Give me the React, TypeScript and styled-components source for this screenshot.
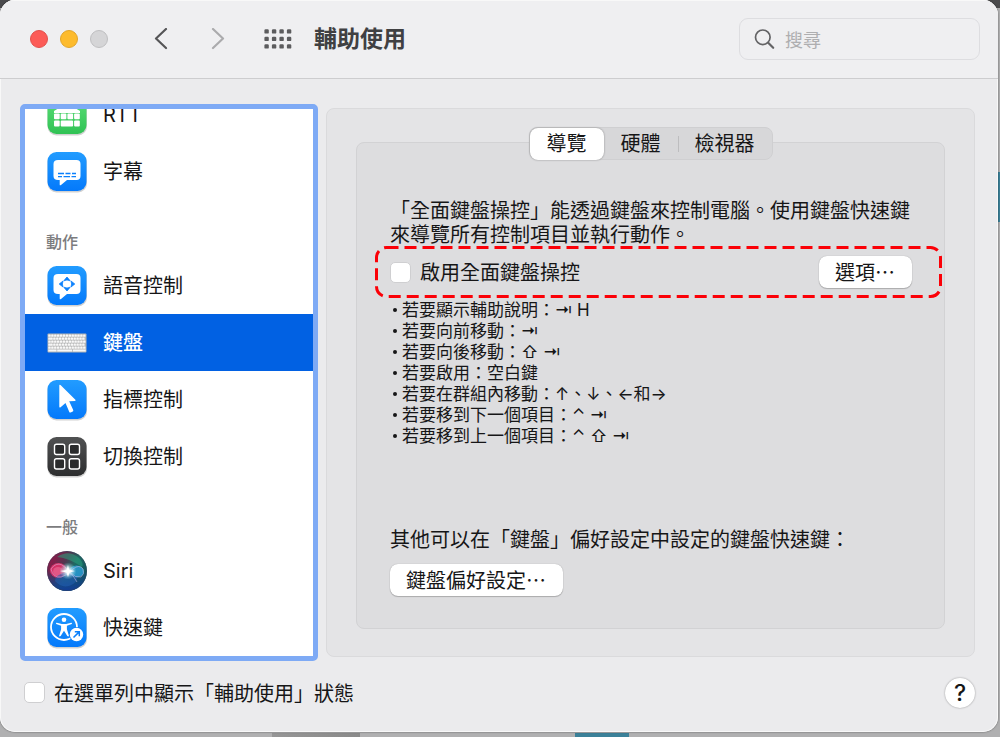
import React from "react";
import styled, { createGlobalStyle } from "styled-components";

const cjk = `"Noto Sans CJK TC", sans-serif`;
const latin = `Inter, "Noto Sans CJK TC", sans-serif`;

const GlobalStyle = createGlobalStyle`
  *, *::before, *::after { box-sizing: border-box; }
  body { margin: 0; font-family: ${cjk}; font-size: 20px; line-height: 24px; color: #161617; }
  button, input { font: inherit; color: inherit; margin: 0; }
`;

const Desktop = styled.div`
  display: flex;
  min-height: 100vh;
  padding: 0 2px 5px 0;
  background:
    linear-gradient(#3b8199, #3b8199) right 0 top 172px / 2px 50px no-repeat,
    linear-gradient(#3b8199, #3b8199) left 575px bottom 0 / 54px 4px no-repeat,
    linear-gradient(90deg, #969696, #8a8a8a) left 272px bottom 0 / 88px 4px no-repeat,
    linear-gradient(#4a4a4c, #4a4a4c) left 0 top 0 / 100% 8px no-repeat,
    #b0b0b1;
`;

const Window = styled.div`
  flex: 1;
  min-width: 0;
  display: flex;
  flex-direction: column;
  border-radius: 15px;
  overflow: hidden;
  background: #ebebed;
  box-shadow: inset 0 0 0 1px #f8f8f8, 0 0 2px #00000088;
`;

const Toolbar = styled.header`
  display: flex;
  align-items: center;
  height: 79px;
  padding: 0 18px 0 30px;
  background: #efeff1;
  border-bottom: 1px solid #cdcdcf;
  box-shadow: inset 0 1px 0 #f8f8f8;
`;

const Lights = styled.div`
  display: flex;
  gap: 12px;
`;

const Light = styled.button<{ $fill: string; $edge: string }>`
  width: 18px;
  height: 18px;
  padding: 0;
  border-radius: 50%;
  border: 1px solid ${(p) => p.$edge};
  background: ${(p) => p.$fill};
`;

const Tools = styled.div`
  display: flex;
  align-items: center;
  gap: 39px;
  margin: 0 22px 0 46px;
`;

const History = styled.div`
  display: flex;
  gap: 43px;
`;

const ToolButton = styled.button`
  display: flex;
  padding: 0;
  border: 0;
  background: none;
`;

const Title = styled.h1`
  flex: 1;
  margin: 0;
  padding-bottom: 4px;
  font-size: 23px;
  font-weight: 700;
  line-height: 32px;
  color: #404042;
`;

const SearchBox = styled.label`
  display: flex;
  align-items: center;
  gap: 10px;
  width: 241px;
  height: 42px;
  padding: 0 14px;
  border: 1px solid #dddde0;
  border-radius: 9px;
`;

const SearchInput = styled.input`
  flex: 1;
  min-width: 0;
  padding: 0;
  border: 0;
  outline: 0;
  background: none;
  font-size: 18px;
  &::placeholder { color: #aeaeb0; opacity: 1; }
`;

const Body = styled.div`
  flex: 1;
  display: grid;
  grid-template-columns: 298px minmax(0, 1fr);
  gap: 8px;
  padding: 25px 23px 0 20px;
`;

const Sidebar = styled.nav`
  contain: size;
  display: flex;
  flex-direction: column;
  justify-content: flex-end;
  overflow: hidden;
  border: 5px solid #7eaaf5;
  border-radius: 5px;
  background: #fff;
`;

const SideItem = styled.button<{ $active?: boolean }>`
  flex: none;
  display: flex;
  align-items: center;
  gap: 16px;
  height: 57px;
  padding: 0 22px;
  border: 0;
  text-align: left;
  font-weight: ${(p) => (p.$active ? 500 : 400)};
  background: ${(p) => (p.$active ? "#0161e3" : "transparent")};
  color: ${(p) => (p.$active ? "#fff" : "#161617")};
`;

const SideLabel = styled.span<{ $latin?: boolean }>`
  padding-bottom: ${(p) => (p.$latin ? 0 : 2)}px;
  font-family: ${(p) => (p.$latin ? latin : cjk)};
`;

const SideHeading = styled.h2`
  flex: none;
  display: flex;
  align-items: flex-end;
  height: 57px;
  margin: 0;
  padding: 0 21px 4px;
  font-size: 16px;
  font-weight: 500;
  color: #7c7c7e;
`;

const Panel = styled.main`
  display: flex;
  flex-direction: column;
  margin: 4px 0;
  padding: 18px 29px 27px;
  border: 1px solid #dadadc;
  border-radius: 8px;
  background: #e4e4e6;
`;

const Tabs = styled.div`
  position: relative;
  z-index: 1;
  display: flex;
  align-items: center;
  align-self: center;
  height: 33px;
  margin-bottom: -18px;
  border: 1px solid #cfcfd1;
  border-radius: 8px;
  background: #d7d7d9;
`;

const Tab = styled.button<{ $active?: boolean; $divided?: boolean }>`
  position: relative;
  height: 32px;
  padding: 0 17px 2px;
  border: 0;
  border-radius: 8px;
  background: ${(p) => (p.$active ? "#fff" : "transparent")};
  box-shadow: ${(p) => (p.$active ? "0 0 2px #00000066" : "none")};
  &::before {
    content: "";
    display: ${(p) => (p.$divided ? "block" : "none")};
    position: absolute;
    left: 0;
    top: 8px;
    height: 16px;
    border-left: 1px solid #bdbdbf;
  }
`;

const Group = styled.section`
  flex: 1;
  padding: 55px 32px 32px 33px;
  border: 1px solid #d2d2d4;
  border-radius: 8px;
  background: #dddddf;
`;

const Paragraph = styled.p`
  margin: 0;
`;

const OptionRow = styled.div`
  position: relative;
  display: flex;
  align-items: center;
  justify-content: space-between;
  height: 52px;
`;

const Callout = styled.svg`
  position: absolute;
  top: 0;
  left: -15px;
  width: calc(100% + 45px);
  height: 100%;
  pointer-events: none;
  rect {
    width: calc(100% - 3px);
    height: calc(100% - 3px);
  }
`;

const CheckLabel = styled.label`
  display: flex;
  align-items: center;
  gap: 9px;
`;

const Checkbox = styled.input`
  appearance: none;
  flex: none;
  width: 21px;
  height: 21px;
  border: 1px solid #cfcfd1;
  border-radius: 5px;
  background: #fff;
`;

const PushButton = styled.button`
  height: 32px;
  padding: 0 17px 1px 16px;
  border: 0;
  border-radius: 8px;
  background: #fff;
  box-shadow: 0 0 1px #00000055, 0 1px 1px #00000033;
`;

const KeyList = styled.ul`
  margin: 0 0 82px;
  padding: 0 0 0 3px;
  list-style: none;
  font-size: 17px;
  line-height: 21px;
`;

const KeyItem = styled.li`
  height: 21px;
  white-space: pre;
  &::before {
    content: "";
    display: inline-block;
    width: 4px;
    height: 4px;
    margin: 0 5px 4px 0;
    border-radius: 50%;
    background: #161617;
  }
`;

const Keys = styled.span`
  font-family: ${latin};
  line-height: 1;
`;

const Prefs = styled.div`
  margin-top: 13px;
`;

const Footer = styled.footer`
  display: flex;
  align-items: center;
  justify-content: space-between;
  height: 71px;
  padding: 0 23px 8px 24px;
`;

const HelpButton = styled.button`
  width: 30px;
  height: 30px;
  padding: 0;
  border: 0;
  border-radius: 50%;
  background: #fff;
  box-shadow: 0 0 2px #00000066;
  font-family: ${latin};
  font-size: 23px;
  font-weight: 500;
`;

const Shell = ({ from, to, children }: { from: string; to: string; children: React.ReactNode }) => {
  const id = React.useId();
  return (
    <svg width="40" height="42" viewBox="0 0 40 42" aria-hidden="true">
      <defs>
        <linearGradient id={id} x1="0" y1="0" x2="0" y2="1">
          <stop offset="0" stopColor={from} />
          <stop offset="1" stopColor={to} />
        </linearGradient>
      </defs>
      <rect x="0.5" y="2" width="39.500" height="39.500" rx="9" fill="#000" opacity="0.18" />
      <rect x="0.5" y="1" width="39" height="39" rx="9" fill={`url(#${id})`} />
      {children}
    </svg>
  );
};

const bubble =
  "M11 9h18.500q4 0 4 4v12q0 4-4 4H20l-6 5q-1.300.9-1.300-.6V29H11q-4.500 0-4.500-4V13q0-4 4.500-4z";

const RttIcon = () => (
  <Shell from="#5fe07a" to="#30c254">
    <path d="M7 17q13-9 26 0v2H7z" fill="#fff" />
    {[7, 13.7, 20.400, 27.100].map((x) => (
      <rect key={x} x={x} y="19.500" width="5.700" height="5.700" rx="1" fill="#fff" />
    ))}
    <rect x="7" y="26.500" width="5.700" height="6" rx="1" fill="#fff" />
    <rect x="13.700" y="26.500" width="12.400" height="6" rx="1" fill="#fff" />
    <rect x="27.100" y="26.500" width="5.700" height="6" rx="1" fill="#fff" />
  </Shell>
);

const CaptionIcon = () => (
  <Shell from="#229cff" to="#0479fb">
    <path d={bubble} fill="#fff" />
    <path d="M11 22.500h6m1.500 0h5m1.500 0h4M11 25.700h4m1.500 0h6.500m1.500 0h4.500" stroke="#0b80fc" strokeWidth="1.300" />
  </Shell>
);

const VoiceIcon = () => (
  <Shell from="#229cff" to="#0479fb">
    <path d={bubble} fill="#fff" />
    <path
      d="M16.800 15.800L20 12l3.200 3.800q-3.200-1.600-6.400 0zM16.800 22.200L20 26l3.200-3.800q-3.200 1.600-6.400 0zM16 16l-3.800 3 3.800 3q-1.300-3 0-6zM24 16l3.800 3-3.800 3q1.300-3 0-6z"
      fill="#0b80fc"
      stroke="#0b80fc"
      strokeWidth="0.800"
      strokeLinejoin="round"
    />
  </Shell>
);

const KeyboardIcon = () => (
  <svg width="40" height="42" viewBox="0 0 40 42" aria-hidden="true">
    <rect x="0.500" y="11.500" width="39" height="19" rx="1" fill="#b4b5b5" />
    {[0, 1, 2, 3, 4].map((row) =>
      Array.from({ length: 13 }, (_, col) => (
        <rect
          key={`${row}-${col}`}
          x={1.300 + col * 2.900 - (row % 2 && col ? 0.900 : 0)}
          y={12.500 + row * 3}
          width="2.400"
          height="2.300"
          rx="0.400"
          fill="#f8f8f8"
        />
      ))
    )}
    <path d="M1.300 28.500h8.200M10.200 28.500h15M26 28.500h12.700" stroke="#f8f8f8" strokeWidth="2.200" />
  </svg>
);

const PointerIcon = () => (
  <Shell from="#229cff" to="#0479fb">
    <path
      d="M12.300 6.500q0-1.500 1.200-.4L28.400 20.800q.8 1-.5 1.100l-5.700.4 4 8.800q.4 1-.5 1.500l-2 .9q-1 .4-1.400-.5l-3.800-9-4.900 4.200q-1.300 1-1.300-.6z"
      fill="#fff"
    />
  </Shell>
);

const SwitchIcon = () => (
  <Shell from="#505152" to="#2d2e2f">
    {[
      [7.500, 8.300],
      [22.300, 8.300],
      [7.500, 22.800],
      [22.300, 22.800],
    ].map(([x, y]) => (
      <rect key={`${x}-${y}`} x={x} y={y} width="10.200" height="10.200" rx="2" fill="#2a2b2c" stroke="#fff" strokeWidth="1.400" />
    ))}
  </Shell>
);

const SiriIcon = () => (
  <svg width="40" height="42" viewBox="0 0 40 42" aria-hidden="true">
    <defs>
      <linearGradient id="orb" x1="0.100" y1="0.200" x2="0.900" y2="0.700">
        <stop offset="0" stopColor="#8d1848" />
        <stop offset="0.350" stopColor="#52364f" />
        <stop offset="0.600" stopColor="#1e6a62" />
        <stop offset="1" stopColor="#12565f" />
      </linearGradient>
      <linearGradient id="depth" x1="0" y1="0" x2="0" y2="1">
        <stop offset="0.500" stopColor="#123c8c" stopOpacity="0" />
        <stop offset="1" stopColor="#123c9c" />
      </linearGradient>
      <radialGradient id="glow">
        <stop offset="0" stopColor="#fff" />
        <stop offset="0.300" stopColor="#e8fbff" stopOpacity="0.850" />
        <stop offset="1" stopColor="#9de" stopOpacity="0" />
      </radialGradient>
    </defs>
    <circle cx="20" cy="21" r="20" fill="url(#orb)" />
    <circle cx="20" cy="21" r="20" fill="url(#depth)" />
    <path d="M10 7Q22-1 32 8q5 5 3 9Q22 8 10 7z" fill="#2aa880" opacity="0.500" />
    <ellipse cx="11.500" cy="20.500" rx="8.500" ry="7.500" fill="#e8336c" opacity="0.850" />
    <ellipse cx="11" cy="21.500" rx="5" ry="4.500" fill="#f27ba4" opacity="0.500" />
    <ellipse cx="29.500" cy="21.500" rx="7.500" ry="6" fill="#2a9fd8" opacity="0.800" />
    <path d="M21 22Q8 24 8 31q6 7 14 5 9-3 8-9-4-1-9-5z" fill="#235eb5" opacity="0.550" />
    <path d="M4 19q5-7 11-4 5 3 9 8t10 4q4-3 2-8-4-5-10 0-6 7-12 8-8 1-10-8zM20 21q7 4 10 11" fill="none" stroke="#dac2e8" strokeWidth="0.700" opacity="0.700" />
    <circle cx="21" cy="21" r="8.500" fill="url(#glow)" />
    <path d="M21 15l1.200 4.800L28 21l-5.500 1.500L21 27l-1.600-4.500L13 21l6.500-1z" fill="#fff" />
    <circle cx="20" cy="21" r="19.500" fill="none" stroke="#31415a" strokeOpacity="0.500" />
  </svg>
);

const ShortcutIcon = () => (
  <Shell from="#229cff" to="#0479fb">
    <circle cx="17" cy="20" r="13" fill="none" stroke="#fff" strokeWidth="1.800" />
    <circle cx="17" cy="12.700" r="2.300" fill="#fff" />
    <path
      d="M9.800 15.700l5 1.400h4.400l5-1.400q1.300 0 .6 1.200l-4.900 1.900v3.400l2 6.600q-.4 1.400-1.600.3L17 23.700l-3.300 5.400q-1.200 1.100-1.600-.3l2-6.600v-3.400l-4.900-1.900q-.7-1.200.6-1.200z"
      fill="#fff"
    />
    <circle cx="29.500" cy="27.500" r="7.500" fill="#0d82fc" />
    <circle cx="29.500" cy="27.500" r="6.700" fill="#fff" />
    <path d="M26.500 30.500l5.400-5.400M27.800 24.700h4.500v4.500" fill="none" stroke="#0b80fc" strokeWidth="1.500" />
  </Shell>
);

const Chevron = ({ d, color }: { d: string; color: string }) => (
  <svg width="14" height="22" viewBox="0 0 14 22" aria-hidden="true">
    <path d={d} fill="none" stroke={color} strokeWidth="2.200" strokeLinecap="round" strokeLinejoin="round" />
  </svg>
);

const GridIcon = () => (
  <svg width="28" height="20" viewBox="0 0 28 20" aria-hidden="true">
    {[0, 7.500, 15].map((y) =>
      [0, 7.500, 15, 22.500].map((x) => (
        <rect key={`${x}-${y}`} x={x + 0.400} y={y + 0.200} width="4.400" height="4.400" rx="1.200" fill="#5c5c5e" />
      ))
    )}
  </svg>
);

const SearchIcon = () => (
  <svg width="21" height="22" viewBox="0 0 21 22" aria-hidden="true">
    <circle cx="8.800" cy="9.300" r="7.300" fill="none" stroke="#636365" strokeWidth="1.700" />
    <path d="M14.200 14.800l5 5" stroke="#636365" strokeWidth="2.200" strokeLinecap="round" />
  </svg>
);

const shortcuts: { label: string; keys?: string }[] = [
  { label: "若要顯示輔助說明：", keys: "⇥ H" },
  { label: "若要向前移動：", keys: "⇥" },
  { label: "若要向後移動：", keys: "⇧ ⇥" },
  { label: "若要啟用：空白鍵" },
  { label: "若要移到下一個項目：", keys: "⌃ ⇥" },
  { label: "若要移到上一個項目：", keys: "⌃ ⇧ ⇥" },
];

export default function App() {
  return (
    <Desktop lang="zh-Hant">
      <GlobalStyle />
      <Window>
        <Toolbar>
          <Lights>
            <Light $fill="#fc5b57" $edge="#e2504c" aria-label="關閉" />
            <Light $fill="#fdbb2d" $edge="#e2a52b" aria-label="縮到最小" />
            <Light $fill="#d5d5d7" $edge="#bfbfc1" aria-label="縮放" disabled />
          </Lights>
          <Tools>
            <History>
              <ToolButton aria-label="上一頁">
                <Chevron d="M12 1L2 10.500l10 9.500" color="#555557" />
              </ToolButton>
              <ToolButton aria-label="下一頁">
                <Chevron d="M2 1L12 10.500L2 20" color="#ababad" />
              </ToolButton>
            </History>
            <ToolButton aria-label="顯示全部">
              <GridIcon />
            </ToolButton>
          </Tools>
          <Title>輔助使用</Title>
          <SearchBox>
            <SearchIcon />
            <SearchInput type="search" placeholder="搜尋" aria-label="搜尋" />
          </SearchBox>
        </Toolbar>

        <Body>
          <Sidebar aria-label="輔助使用">
            <SideItem><RttIcon /><SideLabel $latin>RTT</SideLabel></SideItem>
            <SideItem><CaptionIcon /><SideLabel>字幕</SideLabel></SideItem>
            <SideHeading>動作</SideHeading>
            <SideItem><VoiceIcon /><SideLabel>語音控制</SideLabel></SideItem>
            <SideItem $active aria-current="page"><KeyboardIcon /><SideLabel>鍵盤</SideLabel></SideItem>
            <SideItem><PointerIcon /><SideLabel>指標控制</SideLabel></SideItem>
            <SideItem><SwitchIcon /><SideLabel>切換控制</SideLabel></SideItem>
            <SideHeading>一般</SideHeading>
            <SideItem><SiriIcon /><SideLabel $latin>Siri</SideLabel></SideItem>
            <SideItem><ShortcutIcon /><SideLabel>快速鍵</SideLabel></SideItem>
          </Sidebar>

          <Panel>
            <Tabs role="tablist">
              <Tab role="tab" $active aria-selected="true">導覽</Tab>
              <Tab role="tab" aria-selected="false">硬體</Tab>
              <Tab role="tab" $divided aria-selected="false">檢視器</Tab>
            </Tabs>
            <Group>
              <Paragraph>「全面鍵盤操控」能透過鍵盤來控制電腦。使用鍵盤快速鍵來導覽所有控制項目並執行動作。</Paragraph>
              <OptionRow>
                <CheckLabel>
                  <Checkbox type="checkbox" />
                  啟用全面鍵盤操控
                </CheckLabel>
                <PushButton>選項⋯</PushButton>
                <Callout aria-hidden="true">
                  <rect x="1.500" y="1.500" rx="10" fill="none" stroke="#fb0007" strokeWidth="3" strokeDasharray="12 6" />
                </Callout>
              </OptionRow>
              <KeyList>
                {shortcuts.slice(0, 4).map((s) => (
                  <KeyItem key={s.label}>{s.label}{s.keys && <Keys>{s.keys}</Keys>}</KeyItem>
                ))}
                <KeyItem>
                  若要在群組內移動：<Keys>↑</Keys>、<Keys>↓</Keys>、<Keys>←</Keys>和<Keys>→</Keys>
                </KeyItem>
                {shortcuts.slice(4).map((s) => (
                  <KeyItem key={s.label}>{s.label}<Keys>{s.keys}</Keys></KeyItem>
                ))}
              </KeyList>
              <Paragraph>其他可以在「鍵盤」偏好設定中設定的鍵盤快速鍵：</Paragraph>
              <Prefs>
                <PushButton>鍵盤偏好設定⋯</PushButton>
              </Prefs>
            </Group>
          </Panel>
        </Body>

        <Footer>
          <CheckLabel>
            <Checkbox type="checkbox" />
            在選單列中顯示「輔助使用」狀態
          </CheckLabel>
          <HelpButton aria-label="輔助說明">?</HelpButton>
        </Footer>
      </Window>
    </Desktop>
  );
}
